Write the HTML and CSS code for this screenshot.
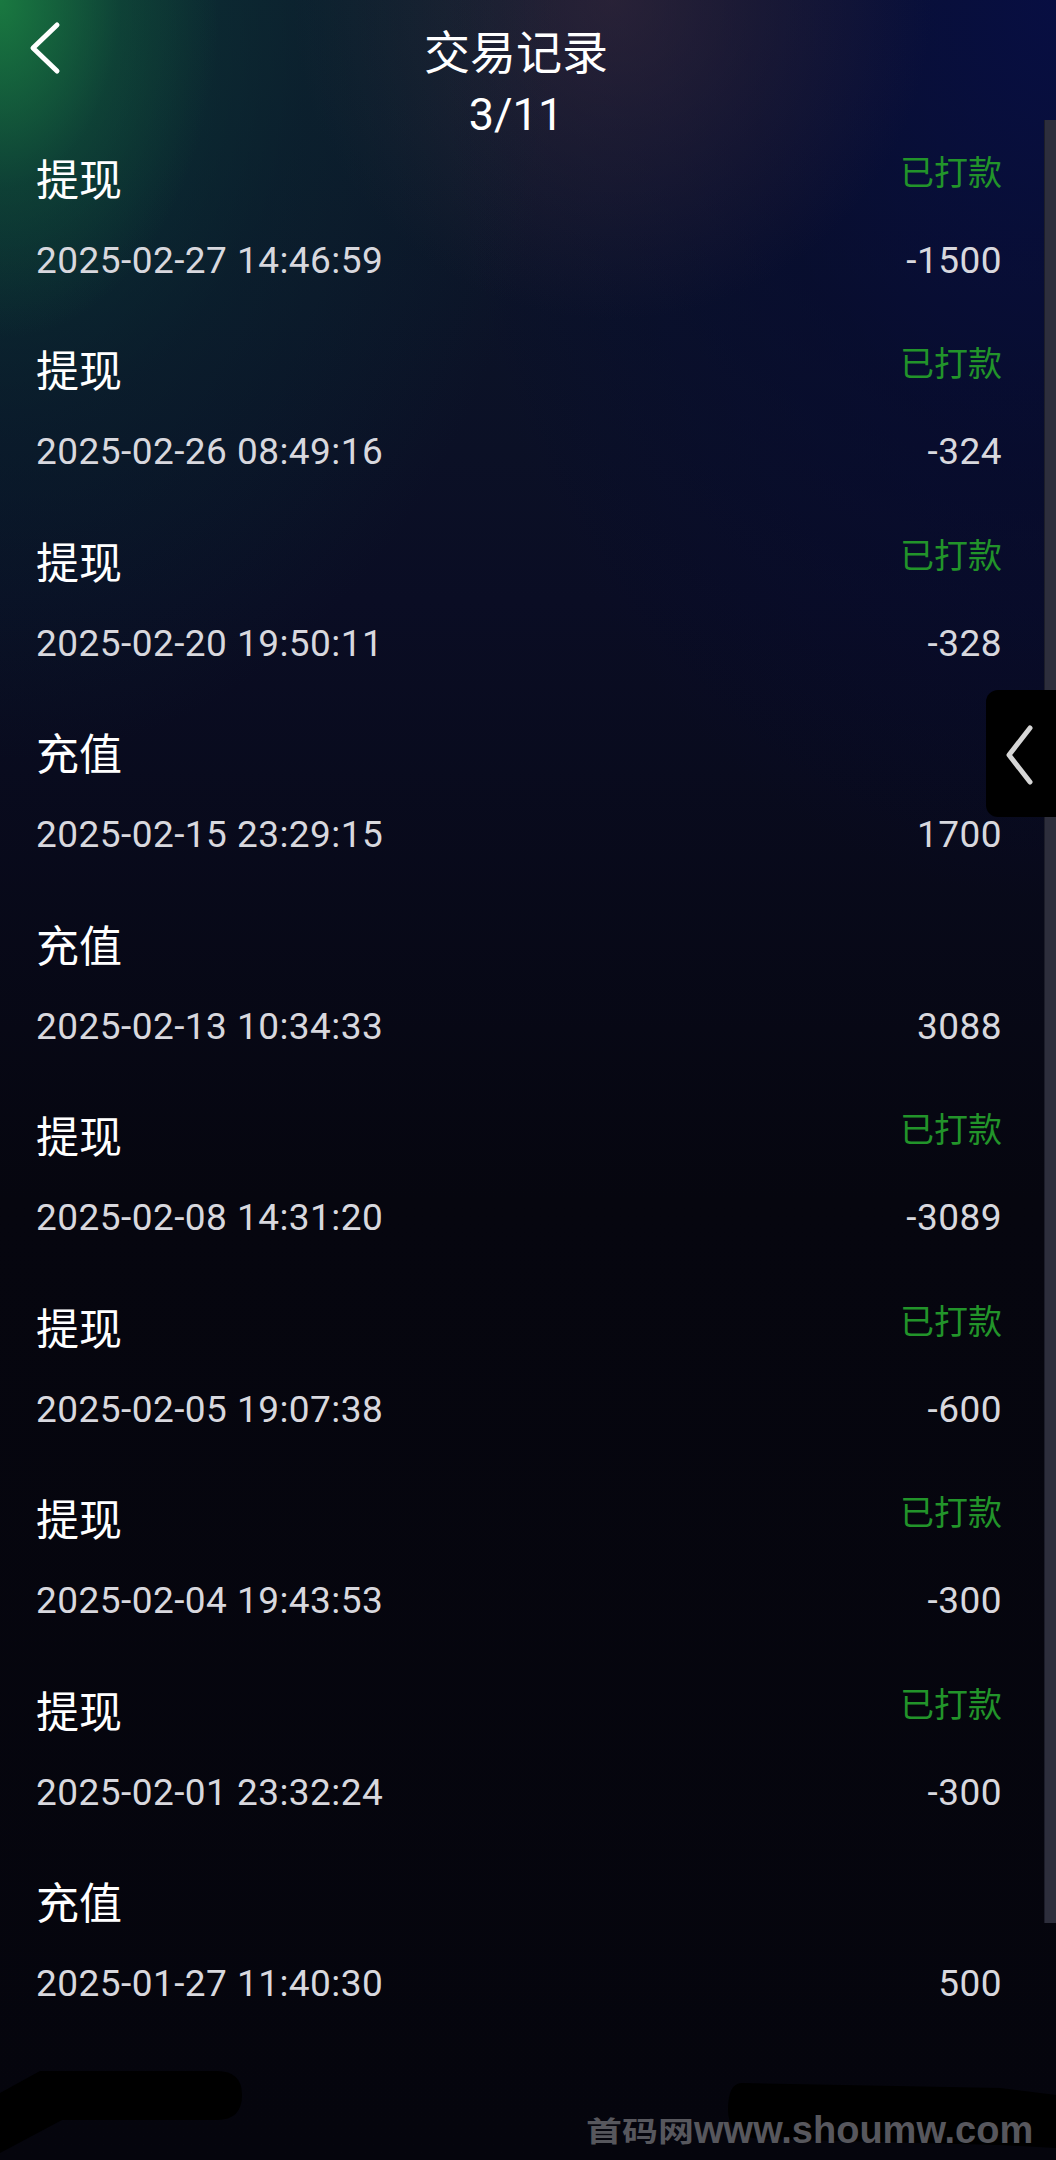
FILE: index.html
```html
<!DOCTYPE html>
<html lang="zh-CN">
<head>
  <meta charset="UTF-8" />
  <meta name="viewport" content="width=device-width, initial-scale=1.0" />
  <title>交易记录</title>
  <link rel="stylesheet" href="styles.css">
</head>
<body>
<div class="page">
  <header class="topbar">
    <a class="back" href="#">
      <svg width="40" height="56" viewBox="0 0 40 56"><polyline points="31,5 7,28 31,51" /></svg>
    </a>
    <div class="heading">
      <div class="title">交易记录</div>
      <div class="pager">3/11</div>
    </div>
    <span></span>
  </header>

  <ul class="records">
    <li class="record">
      <div class="line top"><span class="kind">提现</span><span class="status">已打款</span></div>
      <div class="line"><span class="time">2025-02-27 14:46:59</span><span class="amount">-1500</span></div>
    </li>
    <li class="record">
      <div class="line top"><span class="kind">提现</span><span class="status">已打款</span></div>
      <div class="line"><span class="time">2025-02-26 08:49:16</span><span class="amount">-324</span></div>
    </li>
    <li class="record">
      <div class="line top"><span class="kind">提现</span><span class="status">已打款</span></div>
      <div class="line"><span class="time">2025-02-20 19:50:11</span><span class="amount">-328</span></div>
    </li>
    <li class="record">
      <div class="line top"><span class="kind">充值</span></div>
      <div class="line"><span class="time">2025-02-15 23:29:15</span><span class="amount">1700</span></div>
    </li>
    <li class="record">
      <div class="line top"><span class="kind">充值</span></div>
      <div class="line"><span class="time">2025-02-13 10:34:33</span><span class="amount">3088</span></div>
    </li>
    <li class="record">
      <div class="line top"><span class="kind">提现</span><span class="status">已打款</span></div>
      <div class="line"><span class="time">2025-02-08 14:31:20</span><span class="amount">-3089</span></div>
    </li>
    <li class="record">
      <div class="line top"><span class="kind">提现</span><span class="status">已打款</span></div>
      <div class="line"><span class="time">2025-02-05 19:07:38</span><span class="amount">-600</span></div>
    </li>
    <li class="record">
      <div class="line top"><span class="kind">提现</span><span class="status">已打款</span></div>
      <div class="line"><span class="time">2025-02-04 19:43:53</span><span class="amount">-300</span></div>
    </li>
    <li class="record">
      <div class="line top"><span class="kind">提现</span><span class="status">已打款</span></div>
      <div class="line"><span class="time">2025-02-01 23:32:24</span><span class="amount">-300</span></div>
    </li>
    <li class="record">
      <div class="line top"><span class="kind">充值</span></div>
      <div class="line"><span class="time">2025-01-27 11:40:30</span><span class="amount">500</span></div>
    </li>
  </ul>

  <div class="scroll-thumb"></div>

  <div class="side-tab">
    <svg width="70" height="127" viewBox="0 0 70 127"><polyline points="44,38 23,65 44,92" /></svg>
  </div>

  <!-- scribbles covering the bottom of the screenshot -->
  <svg class="scribble" width="1056" height="120" viewBox="0 2040 1056 120">
    <path d="M0 2093 L40 2071 L217 2071 Q242 2071 242 2095 Q242 2120 217 2120 L62 2120 L0 2153 Z" />
    <path d="M742 2083 L1000 2088 L1056 2095 L1056 2148 L1000 2145 L760 2139 Q728 2137 728 2110 Q728 2083 742 2083 Z" />
  </svg>

  <div class="watermark"><span class="wm-cn">首码网</span>www.shoumw.com</div>
</div>
</body>
</html>
```

FILE: styles.css
```css
html, body {
  margin: 0;
  padding: 0;
  background: #05050f;
}

.page {
  position: relative;
  width: 1056px;
  height: 2160px;
  overflow: hidden;
  color: #fff;
  font-family: "Noto Sans CJK SC", "Noto Sans", sans-serif;
  background:
    radial-gradient(ellipse 220px 340px at 0 0, rgba(28,132,66,0.85), rgba(20,100,60,0.35) 55%, rgba(12,70,55,0) 100%),
    radial-gradient(ellipse 560px 760px at 0 0, rgba(10,66,58,0.75), rgba(8,48,52,0.35) 55%, rgba(8,40,48,0) 100%),
    radial-gradient(ellipse 320px 320px at 58% 0, rgba(64,44,62,0.55), rgba(40,32,50,0) 100%),
    radial-gradient(ellipse 620px 900px at 100% 0, rgba(7,13,68,0.92), rgba(5,9,52,0.55) 50%, rgba(3,6,40,0) 100%),
    linear-gradient(#0e1a2c 0, #0a0d24 600px, #06060f 1200px, #05050d 2160px);
}

/* header */
.topbar {
  display: grid;
  grid-template-columns: 1fr auto 1fr;
  padding: 20px 24px 0 0;
}
.back {
  justify-self: start;
  margin-left: 26px;
  display: block;
  height: 56px;
}
.back svg polyline {
  fill: none;
  stroke: #fff;
  stroke-width: 5;
  stroke-linecap: round;
  stroke-linejoin: round;
}
.heading { text-align: center; }
.title {
  font-size: 46px;
  line-height: 58px;
}
.pager {
  font-family: Roboto, "Liberation Sans", sans-serif;
  font-size: 45px;
  line-height: 40px;
  margin-top: 16.6px;
}

/* list */
.records {
  list-style: none;
  margin: 0;
  padding: 0 54px 0 36px;
}
.record { padding-bottom: 23.5px; }
.line {
  display: flex;
  justify-content: space-between;
  height: 84px;
  line-height: 84px;
}
.line.top { align-items: flex-start; }
.kind { font-size: 43px; }
.status {
  font-size: 34px;
  line-height: 72px;
  color: #22942a;
}
.time, .amount {
  font-family: Roboto, "Liberation Sans", sans-serif;
  font-size: 37px;
  letter-spacing: 0.45px;
  color: #d8d8de;
}

/* overlays */
.scroll-thumb {
  position: absolute;
  left: 1044px;
  top: 120px;
  width: 12px;
  height: 1803px;
  background: #2d2e3c;
  box-shadow: inset 1px 0 0 #1c1d2a;
}
.side-tab {
  position: absolute;
  left: 986px;
  top: 690px;
  width: 70px;
  height: 127px;
  background: #000;
  border-radius: 12px 0 0 12px;
}
.side-tab svg { display: block; }
.side-tab polyline {
  fill: none;
  stroke: #d6d6d6;
  stroke-width: 5;
  stroke-linecap: round;
  stroke-linejoin: round;
}
.scribble {
  position: absolute;
  left: 0;
  top: 2040px;
  fill: #000;
}
.watermark {
  position: absolute;
  left: 586px;
  top: 2107px;
  height: 40px;
  line-height: 40px;
  white-space: nowrap;
  font-family: "Liberation Sans", sans-serif;
  font-weight: bold;
  font-size: 38px;
  color: #57575d;
}
.wm-cn {
  display: inline-block;
  font-family: "Noto Sans CJK SC", sans-serif;
  font-size: 36px;
  transform: scaleY(0.8);
  transform-origin: 50% 75%;
}
```
